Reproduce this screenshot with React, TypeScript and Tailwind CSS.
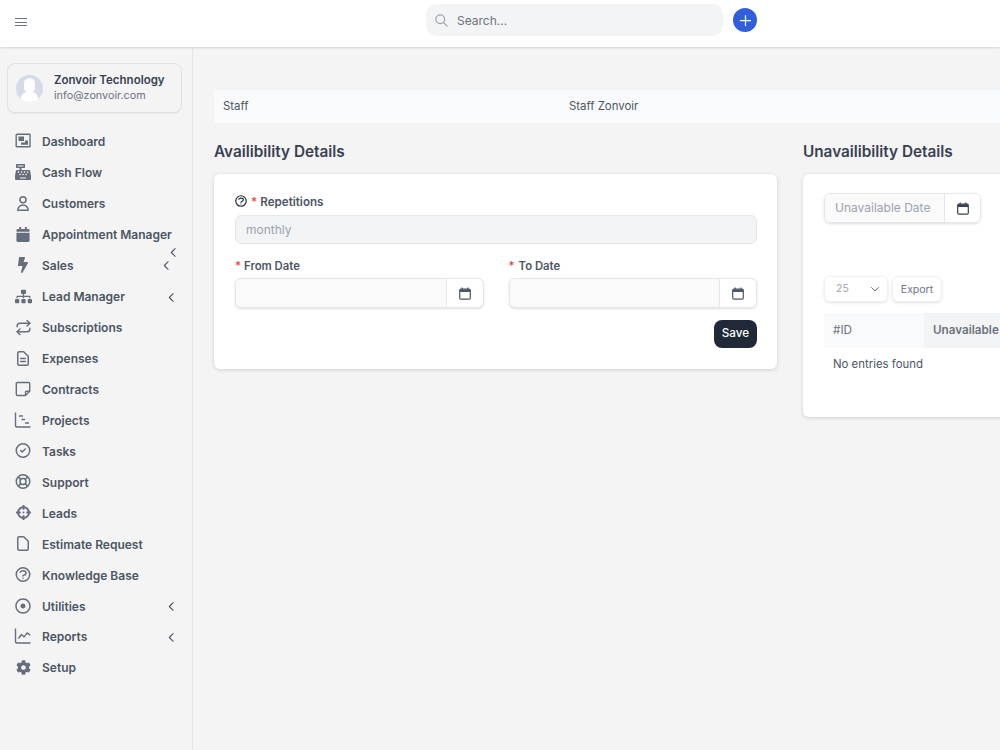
import React from "react";
import { FaCashRegister, FaBolt, FaSitemap, FaCog, FaRegDotCircle, FaCrosshairs, FaCalendar } from "react-icons/fa";
import { HiOutlineUser, HiOutlineDocumentText, HiOutlineCheckCircle, HiOutlineSupport, HiOutlineDocument, HiOutlineQuestionMarkCircle, HiOutlineSearch, HiOutlinePlus, HiOutlineChevronLeft, HiOutlineChevronDown } from "react-icons/hi";
import { Repeat } from "lucide-react";

const sz = "w-[18px] h-[18px]";

const DashIcon = () => (
  <svg viewBox="0 0 18 18" className={sz} fill="none">
    <rect x="2.2" y="2.2" width="13.8" height="12.6" rx="0.6" stroke="currentColor" strokeWidth="1.4" />
    <path d="M4.5 4.5h5.5v4.5H4.5zM11 8.5h3v4.2H7V10.5h4z" fill="currentColor" />
  </svg>
);
const StickyIcon = () => (
  <svg viewBox="0 0 18 18" className={sz} fill="none" stroke="currentColor" strokeWidth="1.4" strokeLinejoin="round">
    <path d="M3.5 2.5h11a1.2 1.2 0 0 1 1.2 1.2v7.6l-4.2 4.2H3.5a1.2 1.2 0 0 1-1.2-1.2V3.7a1.2 1.2 0 0 1 1.2-1.2z" />
    <path d="M11.5 15.5v-3.2a1 1 0 0 1 1-1h3.2" />
  </svg>
);
const GanttIcon = () => (
  <svg viewBox="0 0 18 18" className={sz} fill="none" stroke="currentColor" strokeWidth="1.4">
    <path d="M1.5 1.5v13a1.5 1.5 0 0 0 1.5 1.5h13.5" />
    <path d="M5 5h4M7.5 8.5h3.5M11 12h4" strokeWidth="1.5" />
  </svg>
);
const ChartIcon = () => (
  <svg viewBox="0 0 18 18" className={sz} fill="none" stroke="currentColor" strokeWidth="1.4" strokeLinejoin="round">
    <path d="M1.5 1.5v13a1.5 1.5 0 0 0 1.5 1.5h13.5" />
    <path d="M4.5 11.5l3-4 2.6 2.4 3-4 3 2.2" />
  </svg>
);

const items: { label: string; icon: React.ReactNode; chevron?: boolean }[] = [
  { label: "Dashboard", icon: <DashIcon /> },
  { label: "Cash Flow", icon: <FaCashRegister className="w-[16px] h-[16px]" /> },
  { label: "Customers", icon: <HiOutlineUser className="w-[19px] h-[19px]" /> },
  { label: "Appointment Manager", icon: <FaCalendar className="w-[14px] h-[15px]" /> },
  { label: "Sales", icon: <FaBolt className="w-[14px] h-[16px]" /> },
  { label: "Lead Manager", icon: <FaSitemap className="w-[17px] h-[17px]" />, chevron: true },
  { label: "Subscriptions", icon: <Repeat className="w-[17px] h-[17px]" strokeWidth={2} /> },
  { label: "Expenses", icon: <HiOutlineDocumentText className="w-[19px] h-[19px]" /> },
  { label: "Contracts", icon: <StickyIcon /> },
  { label: "Projects", icon: <GanttIcon /> },
  { label: "Tasks", icon: <HiOutlineCheckCircle className="w-[19px] h-[19px]" /> },
  { label: "Support", icon: <HiOutlineSupport className="w-[19px] h-[19px]" /> },
  { label: "Leads", icon: <FaCrosshairs className="w-[15px] h-[15px]" /> },
  { label: "Estimate Request", icon: <HiOutlineDocument className="w-[19px] h-[19px]" /> },
  { label: "Knowledge Base", icon: <HiOutlineQuestionMarkCircle className="w-[19px] h-[19px]" /> },
  { label: "Utilities", icon: <FaRegDotCircle className="w-[16px] h-[16px]" />, chevron: true },
  { label: "Reports", icon: <ChartIcon />, chevron: true },
  { label: "Setup", icon: <FaCog className="w-[15px] h-[15px]" /> },
];

const Chevron = ({ className }: { className: string }) => (
  <HiOutlineChevronLeft className={className} />
);

const CalIcon = () => (
  <svg viewBox="0 0 12 13" className="w-[12px] h-[13px]" fill="none">
    <rect x="0.7" y="2" width="10.6" height="10.2" rx="1.2" stroke="currentColor" strokeWidth="1.2" />
    <path d="M1 2.2h10V5H1z" fill="currentColor" />
    <path d="M3.2 0.5v2M8.8 0.5v2" stroke="currentColor" strokeWidth="1.2" />
  </svg>
);

const DateInput = () => (
  <div className="flex h-[30px] rounded-md border border-[#e5e7eb] bg-white shadow-sm">
    <div className="flex-1 bg-[#fafafa] rounded-l-md" />
    <div className="w-[37px] border-l border-[#e5e7eb] flex items-center justify-center text-[#4b5563]">
      <CalIcon />
    </div>
  </div>
);

const Req = ({ gap }: { gap: string }) => <span className={`text-[#ef4444] ${gap}`}>*</span>;

export default function App() {
  return (
    <div className="w-[1000px] h-[750px] overflow-hidden flex flex-col bg-[#f4f4f5] font-['Inter','Liberation_Sans',sans-serif]">
      <header className="relative z-10 h-[47px] shrink-0 bg-white shadow-[0_1px_2px_rgba(0,0,0,0.12)] flex items-center">
        <div className="ml-[15px] w-[12px] flex flex-col gap-[2.5px] -mt-[3px]">
          <span className="h-px bg-[#6b7280]" />
          <span className="h-px bg-[#6b7280]" />
          <span className="h-px bg-[#6b7280]" />
        </div>
        <div className="ml-[399px] w-[297px] h-[32px] -mt-[7px] rounded-[10px] bg-[#f3f4f6] flex items-center pl-[8px] text-[#6b7280]">
          <HiOutlineSearch className="w-[15px] h-[15px] text-[#9ca3af]" />
          <span className="ml-[8px] text-[12px] pt-[1px]">Search...</span>
        </div>
        <div className="ml-[10px] -mt-[7px] w-[24px] h-[24px] rounded-full bg-[#2f5fe0] flex items-center justify-center text-white">
          <HiOutlinePlus className="w-[15px] h-[15px]" />
        </div>
      </header>
      <div className="flex-1 flex min-h-0">
        <aside className="w-[193px] shrink-0 border-r border-[#e5e7eb] px-[7px] pt-[16px]">
          <div className="h-[50px] w-[175px] rounded-lg border border-[#dfe1e6] bg-[#f4f4f5] shadow-[0_1px_1px_rgba(0,0,0,0.05)] flex items-center pl-[8px]">
            <div className="relative w-[27px] h-[27px] rounded-full bg-[#d5dae9] overflow-hidden">
              <div className="absolute left-[8px] top-[3px] w-[11px] h-[15px] rounded-full bg-white" />
              <div className="absolute left-[5px] top-[17px] w-[17px] h-[12px] rounded-t-md bg-white" />
            </div>
            <div className="ml-[11px]">
              <div className="text-[11.5px] font-semibold text-[#374151] leading-[16px]">Zonvoir Technology</div>
              <div className="text-[10.8px] text-[#6b7280] leading-[16px]">info@zonvoir.com</div>
            </div>
          </div>
          <nav className="relative mt-[14px]">
            {items.map((it) => (
              <div key={it.label} className="h-[30.94px] flex items-center">
                <div className="w-[18px] ml-[7px] -mt-[2px] flex justify-center text-[#666d7c]">{it.icon}</div>
                <span className="ml-[10px] text-[12px] font-semibold text-[#4b5563]">{it.label}</span>
                {it.chevron && <Chevron className="ml-auto mr-[7px] w-[13px] h-[13px] text-[#4b5563]" />}
              </div>
            ))}
            <Chevron className="absolute left-[160px] top-[119px] w-[13px] h-[13px] text-[#4b5563]" />
            <Chevron className="absolute left-[153px] top-[132px] w-[13px] h-[13px] text-[#4b5563]" />
          </nav>
        </aside>
        <main className="flex-1 min-w-0 overflow-hidden pl-[21px] pt-[43px]">
          <div className="w-[900px] h-[33px] bg-[#f9fafb] flex items-center text-[11.4px] text-[#4b5563]">
            <span className="ml-[9px] w-[346px] pt-[1px]">Staff</span>
            <span className="pt-[1px]">Staff Zonvoir</span>
          </div>
          <div className="flex mt-[18px] gap-[26px] w-[1000px]">
            <section className="w-[563px] shrink-0">
              <h2 className="text-[15.3px] font-semibold text-[#374151] leading-[21px]">Availibility Details</h2>
              <div className="mt-[12px] h-[195px] rounded-md bg-white shadow-[0_1px_4px_rgba(0,0,0,0.15)] pl-[21px] pr-[20px] pt-[20px]">
                <div className="flex items-center text-[11.6px] font-semibold text-[#4b5563] leading-[16px]">
                  <HiOutlineQuestionMarkCircle className="w-[14px] h-[14px] -ml-[1px] text-[#1f2937] mr-[2px] -mt-[2px]" />
                  <span className="ml-[1px]"><Req gap="mr-[3px]" />Repetitions</span>
                </div>
                <div className="mt-[5px] h-[29px] rounded-md border border-[#e5e7eb] bg-[#f3f4f6] flex items-center pl-[10px] text-[12px] text-[#9ca3af]">monthly</div>
                <div className="mt-[14px] grid grid-cols-2 gap-[25px]">
                  <div>
                    <div className="text-[11.3px] font-semibold text-[#4b5563] leading-[16px]"><Req gap="mr-[3px]" />From Date</div>
                    <div className="mt-[4px]"><DateInput /></div>
                  </div>
                  <div>
                    <div className="text-[11.3px] font-semibold text-[#4b5563] leading-[16px]"><Req gap="mr-[4px]" />To Date</div>
                    <div className="mt-[4px]"><DateInput /></div>
                  </div>
                </div>
                <div className="mt-[12px] flex justify-end">
                  <button className="w-[43px] h-[28px] rounded-lg bg-[#1f2937] text-white text-[11.7px] font-medium">Save</button>
                </div>
              </div>
            </section>
            <section className="w-[400px] shrink-0">
              <h2 className="text-[15.3px] font-semibold text-[#374151] leading-[21px]">Unavailibility Details</h2>
              <div className="mt-[12px] h-[243px] rounded-md bg-white shadow-[0_1px_4px_rgba(0,0,0,0.15)] pl-[21px] pt-[19px]">
                <div className="flex w-[157px] h-[30px] rounded-md border border-[#e5e7eb] shadow-sm">
                  <div className="w-[120px] bg-[#fafafa] rounded-l-md border-r border-[#e5e7eb] flex items-center pl-[10px] text-[12px] text-[#9ca3af] whitespace-nowrap">Unavailable Date</div>
                  <div className="flex-1 flex items-center justify-center text-[#374151]"><CalIcon /></div>
                </div>
                <div className="mt-[53px] flex gap-[4px]">
                  <div className="w-[64px] h-[26px] rounded-md border border-[#eef0f2] shadow-sm flex items-center pl-[11px] text-[10.5px] text-[#9ca3af]">
                    25
                    <HiOutlineChevronDown className="ml-auto mr-[6px] w-[12px] h-[12px] text-[#6b7280]" />
                  </div>
                  <div className="w-[50px] h-[26px] rounded-md border border-[#eef0f2] shadow-sm flex items-center justify-center text-[10.5px] text-[#6b7280] pt-[1px]">Export</div>
                </div>
                <div className="mt-[11px] h-[35px] flex text-[11.7px] text-[#6b7280]">
                  <div className="w-[100px] shrink-0 bg-[#f9fafb] flex items-center pl-[9px]">#ID</div>
                  <div className="w-[300px] shrink-0 bg-[#f3f4f6] flex items-center pl-[9px] font-semibold">Unavailable</div>
                </div>
                <div className="mt-[8px] pl-[9px] text-[11.4px] text-[#4b5563] leading-[16px]">No entries found</div>
              </div>
            </section>
          </div>
        </main>
      </div>
    </div>
  );
}
